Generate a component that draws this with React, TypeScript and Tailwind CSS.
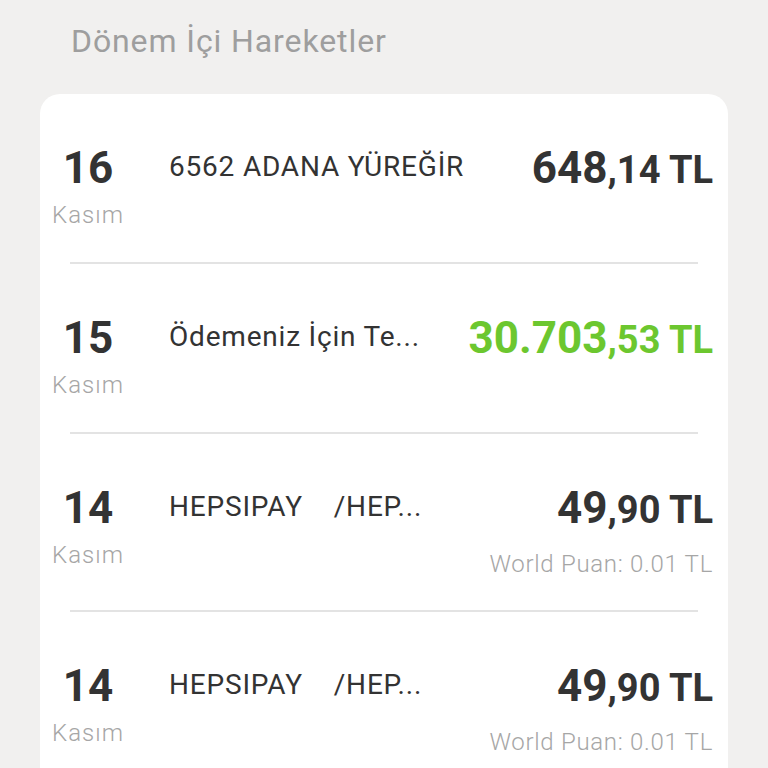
import React from "react";

type Row = {
  day: string;
  desc: string;
  whole: string;
  frac: string;
  green?: boolean;
  puan?: string;
};

const rows: Row[] = [
  { day: "16", desc: "6562 ADANA YÜREĞİR", whole: "648", frac: ",14 TL" },
  { day: "15", desc: "Ödemeniz İçin Te...", whole: "30.703", frac: ",53 TL", green: true },
  { day: "14", desc: "HEPSIPAY\u00a0\u00a0\u00a0\u00a0/HEP...", whole: "49", frac: ",90 TL", puan: "World Puan: 0.01 TL" },
  { day: "14", desc: "HEPSIPAY\u00a0\u00a0\u00a0\u00a0/HEP...", whole: "49", frac: ",90 TL", puan: "World Puan: 0.01 TL" },
];

export default function App() {
  return (
    <div
      className="w-[768px] h-[768px] overflow-hidden bg-[#f1f0ef]"
      style={{ fontFamily: "Roboto, 'Noto Sans', sans-serif" }}
    >
      <div className="pl-[71px] pt-[21px] h-[94px]">
        <h1 className="text-[32px] leading-[40px] font-normal tracking-[0.9px] text-[#9e9e9e]">Dönem İçi Hareketler</h1>
      </div>
      <div className="mx-[40px] bg-white rounded-t-[20px] pl-[13px] pr-[15px]">
        {rows.map((r, i) => (
          <div key={i}>
            {i > 0 && <div className="ml-[17px] mr-[15px] h-[2px] bg-[#e3e3e3]" />}
            <div className={`flex items-start pt-[50px] ${r.puan ? "pb-[32px]" : "pb-[33px]"}`}>
              <div className="w-[70px] flex flex-col items-center shrink-0">
                <div className="text-[44px] leading-[48px] font-bold text-[#333333]">{r.day}</div>
                <div className="mt-[9px] text-[24px] leading-[28px] font-light tracking-[1px] text-[#a6a6a6]">Kasım</div>
              </div>
              <div className="ml-[46px] mt-[7px] flex-1 text-[28px] leading-[32px] tracking-[0.8px] text-[#333333] whitespace-nowrap">
                {r.desc}
              </div>
              <div className="flex flex-col items-end shrink-0">
                <div
                  className={`leading-[48px] font-bold whitespace-nowrap ${r.green ? "text-[#6cc72f]" : "text-[#333333]"}`}
                >
                  <span className="text-[44px]">{r.whole}</span>
                  <span className="text-[38px]">{r.frac}</span>
                </div>
                {r.puan && (
                  <div className="mt-[8px] text-[24px] leading-[28px] font-light tracking-[0.7px] text-[#a6a6a6] whitespace-nowrap">
                    {r.puan}
                  </div>
                )}
              </div>
            </div>
          </div>
        ))}
      </div>
    </div>
  );
}
